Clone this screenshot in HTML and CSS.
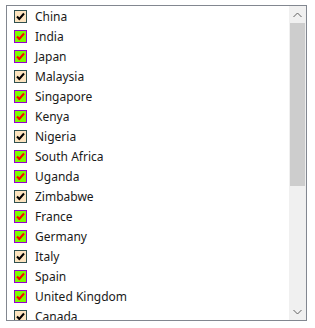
FILE: index.html
```
<!DOCTYPE html>
<html lang="en">
<head>
    <meta charset="UTF-8">
    <title>Countries</title>
    <link rel="stylesheet" href="styles.css">
</head>
<body>
    <div class="listbox">
        <ul class="items">
            <li class="item"><span class="box plain"><svg viewBox="0 0 11 11"><path d="M2 5.5 L4.3 8 L9 2.5"/></svg></span>China</li>
            <li class="item"><span class="box green"><svg viewBox="0 0 11 11"><path d="M2 5.5 L4.3 8 L9 2.5"/></svg></span>India</li>
            <li class="item"><span class="box green"><svg viewBox="0 0 11 11"><path d="M2 5.5 L4.3 8 L9 2.5"/></svg></span>Japan</li>
            <li class="item"><span class="box plain"><svg viewBox="0 0 11 11"><path d="M2 5.5 L4.3 8 L9 2.5"/></svg></span>Malaysia</li>
            <li class="item"><span class="box green"><svg viewBox="0 0 11 11"><path d="M2 5.5 L4.3 8 L9 2.5"/></svg></span>Singapore</li>
            <li class="item"><span class="box green"><svg viewBox="0 0 11 11"><path d="M2 5.5 L4.3 8 L9 2.5"/></svg></span>Kenya</li>
            <li class="item"><span class="box plain"><svg viewBox="0 0 11 11"><path d="M2 5.5 L4.3 8 L9 2.5"/></svg></span>Nigeria</li>
            <li class="item"><span class="box green"><svg viewBox="0 0 11 11"><path d="M2 5.5 L4.3 8 L9 2.5"/></svg></span>South Africa</li>
            <li class="item"><span class="box green"><svg viewBox="0 0 11 11"><path d="M2 5.5 L4.3 8 L9 2.5"/></svg></span>Uganda</li>
            <li class="item"><span class="box plain"><svg viewBox="0 0 11 11"><path d="M2 5.5 L4.3 8 L9 2.5"/></svg></span>Zimbabwe</li>
            <li class="item"><span class="box green"><svg viewBox="0 0 11 11"><path d="M2 5.5 L4.3 8 L9 2.5"/></svg></span>France</li>
            <li class="item"><span class="box green"><svg viewBox="0 0 11 11"><path d="M2 5.5 L4.3 8 L9 2.5"/></svg></span>Germany</li>
            <li class="item"><span class="box plain"><svg viewBox="0 0 11 11"><path d="M2 5.5 L4.3 8 L9 2.5"/></svg></span>Italy</li>
            <li class="item"><span class="box green"><svg viewBox="0 0 11 11"><path d="M2 5.5 L4.3 8 L9 2.5"/></svg></span>Spain</li>
            <li class="item"><span class="box green"><svg viewBox="0 0 11 11"><path d="M2 5.5 L4.3 8 L9 2.5"/></svg></span>United Kingdom</li>
            <li class="item"><span class="box plain"><svg viewBox="0 0 11 11"><path d="M2 5.5 L4.3 8 L9 2.5"/></svg></span>Canada</li>
        </ul>
        <div class="scrollbar">
            <div class="arrow">
                <svg width="9" height="6" viewBox="0 0 9 6"><path d="M0.5 5 L4.5 1 L8.5 5" fill="none" stroke="#606060" stroke-width="1"/></svg>
            </div>
            <div class="track">
                <div class="thumb"></div>
            </div>
            <div class="arrow">
                <svg width="9" height="6" viewBox="0 0 9 6"><path d="M0.5 1 L4.5 5 L8.5 1" fill="none" stroke="#606060" stroke-width="1"/></svg>
            </div>
        </div>
    </div>
</body>
</html>
```
FILE: styles.css
```
* {
    margin: 0;
    padding: 0;
    box-sizing: border-box;
}

body {
    background: #fff;
    font-family: "Noto Sans", "Liberation Sans", sans-serif;
    font-size: 12px;
    color: #1a1a1a;
}

.listbox {
    display: flex;
    width: 301px;
    height: 316px;
    margin: 5px 0 0 6px;
    border: 1px solid #828790;
    overflow: hidden;
}

.items {
    flex: 1;
    list-style: none;
    overflow: hidden;
}

.item {
    display: flex;
    align-items: center;
    height: 20px;
    padding-left: 7px;
    white-space: nowrap;
}

.box {
    display: flex;
    width: 13px;
    height: 13px;
    margin-right: 8px;
    border: 1px solid;
}

.box svg {
    width: 11px;
    height: 11px;
    fill: none;
    stroke-width: 2;
}

.box.plain {
    background: #fce4c0;
    border-color: #2f4f4f;
}

.box.plain svg {
    stroke: #000;
}

.box.green {
    background: #7cfc00;
    border-color: #9400d3;
}

.box.green svg {
    stroke: #ff0000;
}

.scrollbar {
    display: flex;
    flex-direction: column;
    width: 17px;
    background: #f0f0f0;
}

.arrow {
    height: 17px;
    display: flex;
    align-items: center;
    justify-content: center;
}

.track {
    flex: 1;
    padding: 0 1px;
}

.thumb {
    height: 163px;
    background: #cdcdcd;
}
```
